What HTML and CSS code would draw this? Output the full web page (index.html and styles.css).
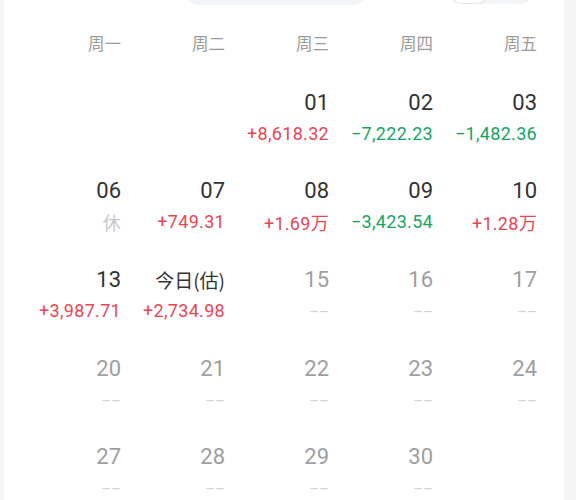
FILE: index.html
```html
<!DOCTYPE html>
<html lang="zh-CN">
<head>
<meta charset="utf-8">
<link rel="stylesheet" href="styles.css">
</head>
<body>
<div class="card">
  <div class="topbar">
    <div class="search"></div>
    <div class="toggle"><div class="knob"></div></div>
  </div>
  <div class="weekdays">
    <div>周一</div><div>周二</div><div>周三</div><div>周四</div><div>周五</div>
  </div>
  <div class="grid">
    <div class="cell"></div>
    <div class="cell"></div>
    <div class="cell"><div class="date">01</div><div class="val up">+8,618.32</div></div>
    <div class="cell"><div class="date">02</div><div class="val down">−7,222.23</div></div>
    <div class="cell"><div class="date">03</div><div class="val down">−1,482.36</div></div>

    <div class="cell"><div class="date">06</div><div class="val rest">休</div></div>
    <div class="cell"><div class="date">07</div><div class="val up">+749.31</div></div>
    <div class="cell"><div class="date">08</div><div class="val up">+1.69<span class="cjk">万</span></div></div>
    <div class="cell"><div class="date">09</div><div class="val down">−3,423.54</div></div>
    <div class="cell"><div class="date">10</div><div class="val up">+1.28<span class="cjk">万</span></div></div>

    <div class="cell"><div class="date">13</div><div class="val up">+3,987.71</div></div>
    <div class="cell"><div class="date today">今日(估)</div><div class="val up">+2,734.98</div></div>
    <div class="cell future"><div class="date">15</div><div class="val"><span class="dash">––</span></div></div>
    <div class="cell future"><div class="date">16</div><div class="val"><span class="dash">––</span></div></div>
    <div class="cell future"><div class="date">17</div><div class="val"><span class="dash">––</span></div></div>

    <div class="cell future"><div class="date">20</div><div class="val"><span class="dash">––</span></div></div>
    <div class="cell future"><div class="date">21</div><div class="val"><span class="dash">––</span></div></div>
    <div class="cell future"><div class="date">22</div><div class="val"><span class="dash">––</span></div></div>
    <div class="cell future"><div class="date">23</div><div class="val"><span class="dash">––</span></div></div>
    <div class="cell future"><div class="date">24</div><div class="val"><span class="dash">––</span></div></div>

    <div class="cell future"><div class="date">27</div><div class="val"><span class="dash">––</span></div></div>
    <div class="cell future"><div class="date">28</div><div class="val"><span class="dash">––</span></div></div>
    <div class="cell future"><div class="date">29</div><div class="val"><span class="dash">––</span></div></div>
    <div class="cell future"><div class="date">30</div><div class="val"><span class="dash">––</span></div></div>
    <div class="cell"></div>
  </div>
</div>
</body>
</html>
```
FILE: styles.css
```css
html, body {
  margin: 0;
  padding: 0;
  background: #f5f5f5;
  height: 500px;
  overflow: hidden;
}
body {
  font-family: Roboto, "Noto Sans CJK SC", sans-serif;
}
.card {
  margin-left: 4px;
  width: 560px;
  height: 500px;
  background: #ffffff;
  overflow: hidden;
}
.topbar {
  display: flex;
  align-items: flex-start;
  height: 6px;
}
.search {
  margin-left: 181px;
  width: 182px;
  height: 36px;
  margin-top: -31px;
  border-radius: 14px;
  background: #f2f5f8;
}
.toggle {
  margin-left: 81px;
  width: 86px;
  height: 32px;
  margin-top: -28px;
  border-radius: 14px;
  background: #f2f5f8;
  display: flex;
  align-items: flex-end;
  padding: 0 0 1px 1px;
  box-sizing: border-box;
}
.knob {
  width: 40px;
  height: 28px;
  border-radius: 13px;
  background: #fff;
  box-shadow: 0 0 0 1px #e6e6e6;
}
.weekdays {
  display: grid;
  grid-template-columns: repeat(5, 104px);
  padding-left: 13px;
  margin-top: 26.5px;
  font-family: "Noto Sans CJK SC", sans-serif;
  font-size: 16.5px;
  line-height: 20px;
  color: #9a9a9a;
  text-align: right;
}
.grid {
  display: grid;
  grid-template-columns: repeat(5, 104px);
  grid-auto-rows: 88.6px;
  padding-left: 13px;
  margin-top: 36.3px;
  text-align: right;
}
.date {
  font-size: 22px;
  line-height: 28px;
  color: #333333;
  white-space: nowrap;
}
.date.today {
  font-family: "Noto Sans CJK SC", sans-serif;
  font-size: 19px;
}
.val {
  margin-top: 5px;
  font-size: 18px;
  line-height: 24px;
  letter-spacing: 0.3px;
  white-space: nowrap;
}
.cjk {
  font-family: "Noto Sans CJK SC", sans-serif;
}
.up { color: #ea4552; }
.down { color: #16a55f; }
.rest {
  font-family: "Noto Sans CJK SC", sans-serif;
  color: #c8c8c8;
}
.future .date { color: #9e9e9e; }
.dash {
  font-size: 15px;
  letter-spacing: 0;
  color: #d2d2d2;
}
```
